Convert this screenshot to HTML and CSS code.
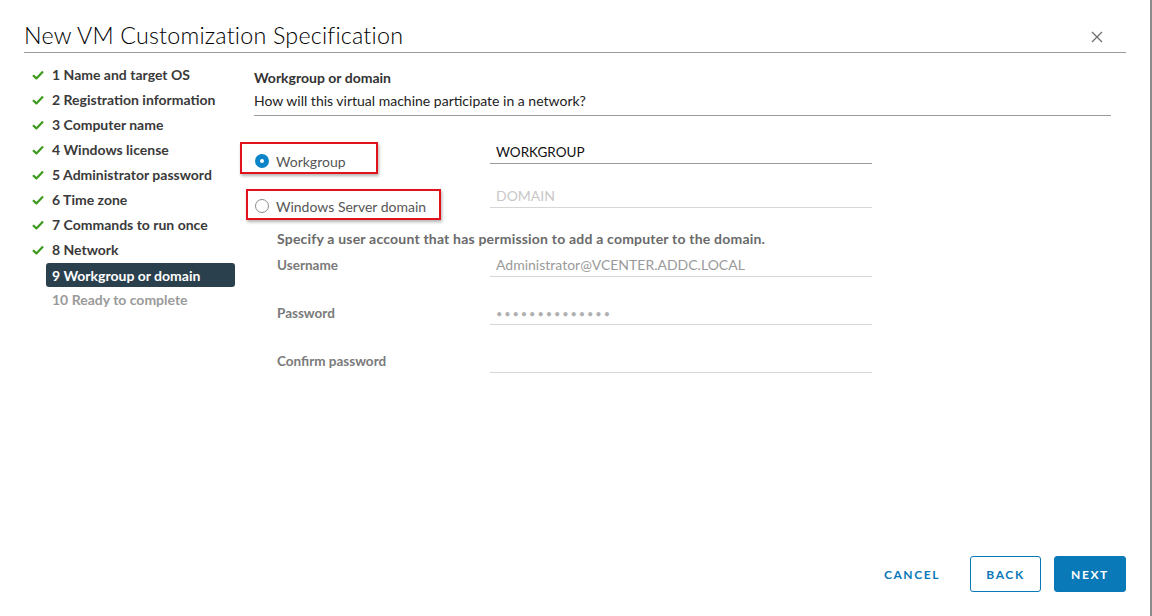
FILE: index.html
```html
<!DOCTYPE html>
<html>
<head>
<meta charset="utf-8">
<link rel="stylesheet" href="styles.css">
</head>
<body>
<div class="modal">
  <header class="modal-header">
    <h1 class="modal-title">New VM Customization Specification</h1>
    <button class="close" aria-label="Close">
      <svg width="12" height="12" viewBox="0 0 12 12"><path d="M1 1 L11 11 M11 1 L1 11" stroke="#6b6b6b" stroke-width="1.2" fill="none"/></svg>
    </button>
  </header>
  <div class="modal-body">
    <nav class="steps">
      <div class="step done"><svg class="check" viewBox="0 0 12 10"><path d="M1 5.2 L4.4 8.4 L11 1.6" stroke="#3c9a1c" stroke-width="2.2" fill="none" stroke-linejoin="round"/></svg>1 Name and target OS</div>
      <div class="step done"><svg class="check" viewBox="0 0 12 10"><path d="M1 5.2 L4.4 8.4 L11 1.6" stroke="#3c9a1c" stroke-width="2.2" fill="none" stroke-linejoin="round"/></svg>2 Registration information</div>
      <div class="step done"><svg class="check" viewBox="0 0 12 10"><path d="M1 5.2 L4.4 8.4 L11 1.6" stroke="#3c9a1c" stroke-width="2.2" fill="none" stroke-linejoin="round"/></svg>3 Computer name</div>
      <div class="step done"><svg class="check" viewBox="0 0 12 10"><path d="M1 5.2 L4.4 8.4 L11 1.6" stroke="#3c9a1c" stroke-width="2.2" fill="none" stroke-linejoin="round"/></svg>4 Windows license</div>
      <div class="step done"><svg class="check" viewBox="0 0 12 10"><path d="M1 5.2 L4.4 8.4 L11 1.6" stroke="#3c9a1c" stroke-width="2.2" fill="none" stroke-linejoin="round"/></svg>5 Administrator password</div>
      <div class="step done"><svg class="check" viewBox="0 0 12 10"><path d="M1 5.2 L4.4 8.4 L11 1.6" stroke="#3c9a1c" stroke-width="2.2" fill="none" stroke-linejoin="round"/></svg>6 Time zone</div>
      <div class="step done"><svg class="check" viewBox="0 0 12 10"><path d="M1 5.2 L4.4 8.4 L11 1.6" stroke="#3c9a1c" stroke-width="2.2" fill="none" stroke-linejoin="round"/></svg>7 Commands to run once</div>
      <div class="step done"><svg class="check" viewBox="0 0 12 10"><path d="M1 5.2 L4.4 8.4 L11 1.6" stroke="#3c9a1c" stroke-width="2.2" fill="none" stroke-linejoin="round"/></svg>8 Network</div>
      <div class="step active">9 Workgroup or domain</div>
      <div class="step pending">10 Ready to complete</div>
    </nav>
    <main class="content">
      <h2 class="section-title">Workgroup or domain</h2>
      <p class="section-desc">How will this virtual machine participate in a network?</p>
      <div class="choice-grid">
        <div class="radio-cell r1">
          <span class="radio checked"></span><span class="radio-label">Workgroup</span>
          <span class="highlight h1"></span>
        </div>
        <div class="field strong"><span class="value">WORKGROUP</span></div>
        <div class="radio-cell r2">
          <span class="radio"></span><span class="radio-label">Windows Server domain</span>
          <span class="highlight h2"></span>
        </div>
        <div class="field"><span class="placeholder">DOMAIN</span></div>
      </div>
      <div class="domain-section">
        <p class="hint">Specify a user account that has permission to add a computer to the domain.</p>
        <div class="form-row">
          <label class="form-label">Username</label>
          <div class="field"><span class="disabled">Administrator@VCENTER.ADDC.LOCAL</span></div>
        </div>
        <div class="form-row">
          <label class="form-label">Password</label>
          <div class="field"><span class="dots">••••••••••••••</span></div>
        </div>
        <div class="form-row">
          <label class="form-label">Confirm password</label>
          <div class="field"><span class="disabled"></span></div>
        </div>
      </div>
    </main>
  </div>
  <footer class="modal-footer">
    <button class="btn btn-link">CANCEL</button>
    <button class="btn btn-outline">BACK</button>
    <button class="btn btn-primary">NEXT</button>
  </footer>
</div>
</body>
</html>
```

FILE: styles.css
```css
* { box-sizing: border-box; }
html, body { margin: 0; padding: 0; }
body {
  width: 1152px;
  height: 616px;
  background: #fff;
  font-family: Lato, "Open Sans", sans-serif;
  color: #333;
  overflow: hidden;
}
.modal {
  height: 616px;
  display: flex;
  flex-direction: column;
  padding: 0 24px 24px 24px;
  border-right: 2px solid #8a8a8a;
}
.modal-header {
  display: flex;
  align-items: flex-end;
  justify-content: space-between;
  border-bottom: 1px solid #9a9a9a;
  height: 53px;
  padding-bottom: 2px;
}
.modal-title {
  margin: 0;
  font-size: 23.3px;
  font-weight: 300;
  color: #000;
  line-height: 30px;
  letter-spacing: 0.2px;
}
.close {
  background: none;
  border: 0;
  padding: 0;
  margin: 0 23px 7px 0;
  width: 12px;
  height: 12px;
  display: flex;
}
.modal-body {
  flex: 1;
  display: flex;
}
.steps {
  width: 212px;
  padding-top: 9px;
  display: flex;
  flex-direction: column;
}
.step {
  height: 25px;
  display: flex;
  align-items: center;
  font-size: 14px;
  font-weight: 700;
  color: #3a3a3a;
  padding-left: 28px;
  position: relative;
}
.check {
  position: absolute;
  left: 8px;
  top: 8px;
  width: 12px;
  height: 10px;
}
.step.active {
  margin-left: 22px;
  padding-left: 6px;
  background: #2a404d;
  color: #fff;
  border-radius: 3px;
  width: 189px;
  height: 24px;
  margin-top: 1px;
}
.step.pending {
  color: #9a9a9a;
}
.content {
  flex: 1;
  margin-left: 18px;
  margin-right: 15px;
}
.section-title {
  margin: 15px 0 0;
  font-size: 14px;
  font-weight: 700;
  line-height: 20px;
  color: #333;
}
.section-desc {
  margin: 3px 0 0;
  font-size: 14px;
  line-height: 20px;
  color: #222;
  border-bottom: 1px solid #9a9a9a;
  padding-bottom: 4px;
}
.choice-grid {
  display: grid;
  grid-template-columns: 236px 382px;
  grid-auto-rows: 44px;
  margin-top: 15px;
}
.radio-cell {
  position: relative;
  display: flex;
  align-items: center;
  height: 20px;
  font-size: 14px;
  font-weight: 400;
  color: #565656;
}
.r1 { margin-top: 20px; }
.r2 { margin-top: 21px; }
.radio {
  width: 14px;
  height: 14px;
  border-radius: 50%;
  border: 1px solid #8c8c8c;
  margin-left: 1px;
  margin-right: 7px;
  background: #fff;
  flex: none;
}
.radio.checked {
  border: 5px solid #0b85c8;
  background: #fff;
}
.highlight {
  position: absolute;
  border: 2px solid #e0121b;
  box-shadow: 1px 2px 3px rgba(0,0,0,0.3);
}
.h1 { left: -14px; top: -9px; width: 138px; height: 32px; }
.h2 { left: -8px; top: -7px; width: 195px; height: 31px; }
.field {
  margin-top: 11px;
  height: 22px;
  border-bottom: 1px solid #d6d6d6;
  padding-left: 6px;
  font-size: 14px;
  line-height: 20px;
}
.field.strong { border-bottom-color: #9a9a9a; }
.value { color: #111; font-size: 13.5px; }
.placeholder { color: #c8c8c8; }
.disabled { color: #9a9a9a; }
.dots { color: #b0b0b0; font-size: 11px; letter-spacing: 1.9px; }
.domain-section {
  padding-left: 23px;
}
.hint {
  margin: 10px 0 0;
  font-size: 14px;
  letter-spacing: 0.2px;
  line-height: 20px;
  font-weight: 700;
  color: #6a6a6a;
}
.form-row {
  display: grid;
  grid-template-columns: 213px 382px;
  height: 48px;
}
.hint + .form-row { margin-top: 6px; }
.form-label {
  font-size: 13.5px;
  font-weight: 700;
  color: #7a7a7a;
  line-height: 20px;
}
.form-row .field { margin-top: 0; }
.modal-footer {
  display: flex;
  justify-content: flex-end;
  align-items: center;
  gap: 13px;
}
.btn {
  height: 36px;
  width: 72px;
  font-family: inherit;
  font-size: 12px;
  font-weight: 700;
  letter-spacing: 1.6px;
  border-radius: 3px;
  border: 1px solid transparent;
  background: none;
  color: #0a79b8;
  padding: 0;
}
.btn-link { width: 84px; margin-right: 3px; }
.btn-outline { border-color: #0a79b8; width: 71px; }
.btn-primary { background: #0a79b8; color: #fff; border-color: #0a79b8; }
```
